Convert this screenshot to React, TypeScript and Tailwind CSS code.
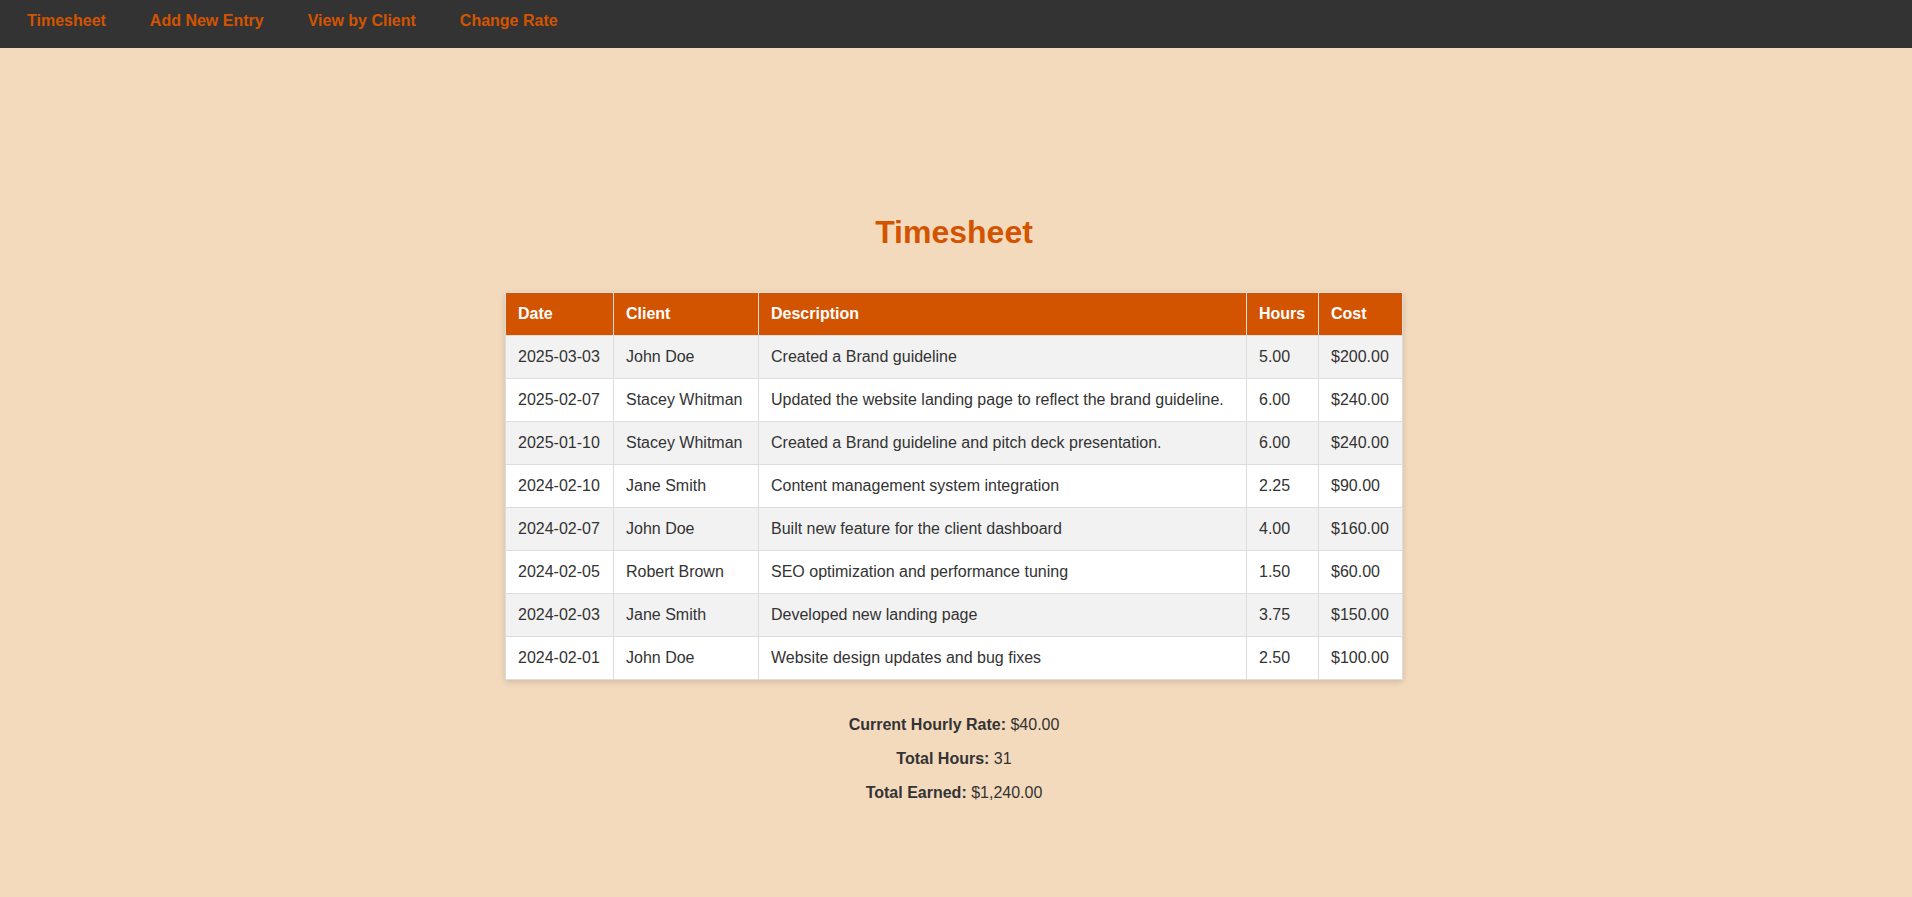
import React from "react";

type Entry = {
  date: string;
  client: string;
  description: string;
  hours: number;
};

const RATE = 40;

const entries: Entry[] = [
  { date: "2025-03-03", client: "John Doe", description: "Created a Brand guideline", hours: 5 },
  { date: "2025-02-07", client: "Stacey Whitman", description: "Updated the website landing page to reflect the brand guideline.", hours: 6 },
  { date: "2025-01-10", client: "Stacey Whitman", description: "Created a Brand guideline and pitch deck presentation.", hours: 6 },
  { date: "2024-02-10", client: "Jane Smith", description: "Content management system integration", hours: 2.25 },
  { date: "2024-02-07", client: "John Doe", description: "Built new feature for the client dashboard", hours: 4 },
  { date: "2024-02-05", client: "Robert Brown", description: "SEO optimization and performance tuning", hours: 1.5 },
  { date: "2024-02-03", client: "Jane Smith", description: "Developed new landing page", hours: 3.75 },
  { date: "2024-02-01", client: "John Doe", description: "Website design updates and bug fixes", hours: 2.5 },
];

const money = (n: number) =>
  "$" + n.toLocaleString("en-US", { minimumFractionDigits: 2, maximumFractionDigits: 2 });

export default function App() {
  const totalHours = entries.reduce((sum, e) => sum + e.hours, 0);
  const totalEarned = totalHours * RATE;

  const th = "h-[43px] px-3 text-left font-bold border border-[#ddd] leading-[18px]";
  const td = "h-[43px] px-3 border border-[#ddd] leading-[18px]";

  return (
    <div className="min-h-[897px] bg-[#f3dabd] font-['Liberation_Sans',Arial,sans-serif] text-[#333]">
      {/* Nav */}
      <nav className="h-[48px] bg-[#333] flex items-start pt-[11px] pl-[27px] gap-[44px]">
        {["Timesheet", "Add New Entry", "View by Client", "Change Rate"].map((label) => (
          <a key={label} href="#" className="text-[16px] leading-[20px] font-bold text-[#d35400]">
            {label}
          </a>
        ))}
      </nav>

      <main className="flex flex-col items-center pt-[166px] pr-[4px]">
        <h1 className="text-[32px] leading-[37px] font-bold text-[#d35400]">Timesheet</h1>

        <table className="mt-[41px] w-[898px] border-collapse bg-white text-[16px] shadow-[0_2px_6px_rgba(0,0,0,0.15)]">
          <thead>
            <tr className="bg-[#d35400] text-white">
              <th className={`${th} w-[108px]`}>Date</th>
              <th className={`${th} w-[145px]`}>Client</th>
              <th className={th}>Description</th>
              <th className={`${th} w-[72px]`}>Hours</th>
              <th className={`${th} w-[84px]`}>Cost</th>
            </tr>
          </thead>
          <tbody>
            {entries.map((e, i) => (
              <tr key={i} className={i % 2 === 0 ? "bg-[#f2f2f2]" : "bg-white"}>
                <td className={td}>{e.date}</td>
                <td className={td}>{e.client}</td>
                <td className={td}>{e.description}</td>
                <td className={td}>{e.hours.toFixed(2)}</td>
                <td className={td}>{money(e.hours * RATE)}</td>
              </tr>
            ))}
          </tbody>
        </table>

        <div className="mt-[36px] flex flex-col items-center gap-[16px] text-[16px] leading-[18px]">
          <p>
            <strong>Current Hourly Rate:</strong> {money(RATE)}
          </p>
          <p>
            <strong>Total Hours:</strong> {totalHours}
          </p>
          <p>
            <strong>Total Earned:</strong> {money(totalEarned)}
          </p>
        </div>
      </main>
    </div>
  );
}
